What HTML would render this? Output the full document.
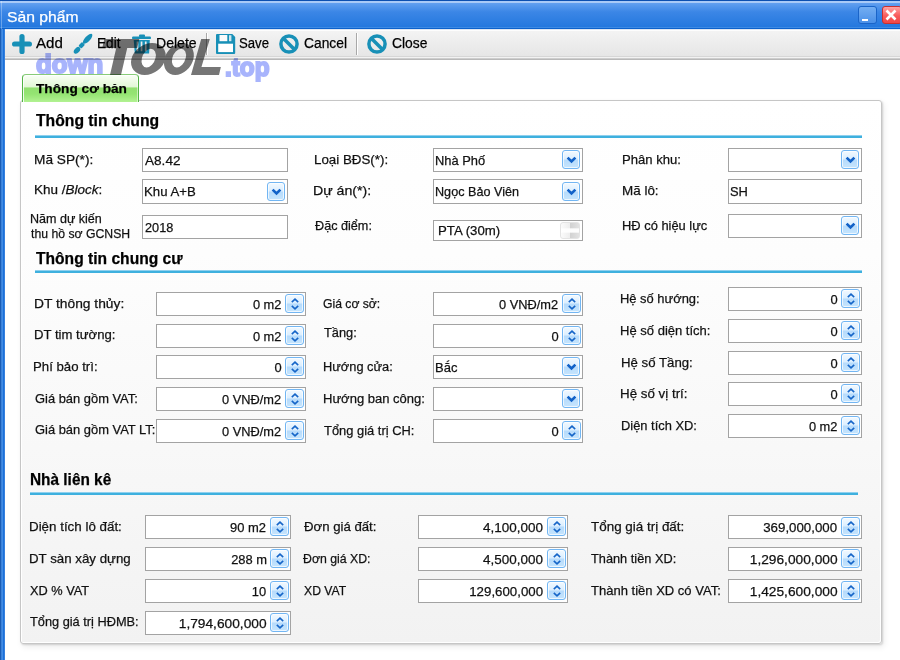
<!DOCTYPE html>
<html><head><meta charset="utf-8"><style>
*{margin:0;padding:0;box-sizing:border-box}
html,body{width:900px;height:660px;overflow:hidden;background:#fff;font-family:"Liberation Sans", sans-serif}
.a{position:absolute}
.t{position:absolute;white-space:nowrap;line-height:18px;transform-origin:0 0;font-family:"Liberation Sans", sans-serif;-webkit-text-stroke:0.25px currentColor}
.box{position:absolute;background:#fff;border:1px solid #a3a3a3}
.btn{position:absolute;border:1px solid #72b6f3;border-radius:3px;box-shadow:inset 0 0 0 1px rgba(255,255,255,0.7);background:linear-gradient(#f2f9ff 0%,#dcefff 46%,#b6dbfc 54%,#c6e5fd 100%);display:flex;align-items:center;justify-content:center}
</style></head><body>
<div class="a" style="left:0;top:0;width:5px;height:660px;background:linear-gradient(90deg,#1b5db5 0,#1b5db5 1px,#3b82d9 1px,#3b82d9 2px,#3f8ce6 2px,#3f8ce6 3px,#1c70d8 3px,#1c70d8 4px,#3580de 4px)"></div>
<div class="a" style="left:0;top:0;width:900px;height:29px;background:linear-gradient(#0c4fb0 0,#0c4fb0 1px,#a9caf7 1px,#a9caf7 3px,#62a0f0 3px,#3b86e6 12px,#2478de 27px,#3c8ae4 27px,#3c8ae4 28px,#0c62cc 28px)"></div>
<div class="t" style="left:7.00px;top:7.90px;font-size:15px;font-weight:normal;color:#fff;transform:scaleX(1.0454);">Sản phẩm</div>
<div class="a" style="left:1px;top:1px;width:1px;height:28px;background:rgba(255,255,255,0.3)"></div>
<div class="a" style="left:858px;top:6px;width:19px;height:18px;border:1px solid #1a64c8;border-radius:3px;background:linear-gradient(#74aef2,#4a90e8)"></div>
<div class="a" style="left:862px;top:19px;width:6px;height:2px;background:#fff"></div>
<div class="a" style="left:882px;top:6px;width:20px;height:18px;border:1px solid #c83030;border-radius:3px;background:linear-gradient(#ffa4a4,#f85c5c 55%,#f04646)"></div>
<svg class="a" style="left:884px;top:8px" width="14" height="14" viewBox="0 0 14 14"><path d="M2.5 2.5 L11.5 11.5 M11.5 2.5 L2.5 11.5" stroke="#fff" stroke-width="2.6"/></svg>
<div class="a" style="left:5px;top:29px;width:895px;height:31px;background:linear-gradient(#dce6f4 0,#dce6f4 1px,#fdfdfd 1px,#fdfdfd 2px,#f3f3f3 2px,#e6e6e6 27px,#d6d6d6 27px,#d6d6d6 28px,#f2f2f2 28px,#f2f2f2 29px,#cdcdcd 29px,#cdcdcd 30px,#b8b8b8 30px)"></div>
<svg class="a" style="left:12px;top:34px" width="20" height="20" viewBox="0 0 20 20"><path d="M10 2.6 V17.4 M2.6 10 H17.4" stroke="#1890b7" stroke-width="5.2" stroke-linecap="round"/></svg>
<svg class="a" style="left:0;top:0" width="100" height="60"><g transform="translate(74.6,53) rotate(-47.5)" fill="#1890b7"><ellipse cx="3.6" cy="0" rx="3.9" ry="2.5"/><rect x="7.9" y="-2.1" width="5.2" height="4.2" rx="1"/><ellipse cx="19.3" cy="0" rx="6.4" ry="2.6"/></g></svg>
<svg class="a" style="left:128px;top:28px" width="30" height="30" viewBox="0 0 30 30"><rect x="11" y="6.4" width="6" height="2.8" rx="1" fill="#1890b7"/><rect x="4" y="8.6" width="19" height="2.5" rx="1.2" fill="#1890b7"/><path fill-rule="evenodd" fill="#1890b7" d="M5.7 12 H21.8 L21.1 25.5 H6.8 Z M8.6 13.6 H10.3 V23.2 H8.6 Z M12.7 13.6 H14.4 V23.2 H12.7 Z M16.9 13.6 H18.6 V23.2 H16.9 Z"/></svg>
<svg class="a" style="left:210px;top:28px" width="30" height="30" viewBox="0 0 30 30"><path fill="#1890b7" d="M7 6 H22.3 L25.2 9 V24.9 Q25.2 25.9 24.2 25.9 H7 Q6 25.9 6 24.9 V7 Q6 6 7 6 Z"/><rect x="8.2" y="15.7" width="14.8" height="8.4" fill="#fff"/><rect x="9.5" y="7" width="7.8" height="6.2" fill="#fbfbfb"/><rect x="19" y="7.2" width="2.4" height="6" fill="#cfe6ee"/></svg>
<div class="a" style="left:279px;top:34px;width:20px;height:20px"><svg width="20" height="20" viewBox="0 0 20 20"><circle cx="10" cy="10" r="8.1" fill="none" stroke="#1890b7" stroke-width="3.5"/><path d="M4.5 4.5 L15.5 15.5" stroke="#1890b7" stroke-width="3.5"/></svg></div>
<div class="a" style="left:367px;top:34px;width:20px;height:20px"><svg width="20" height="20" viewBox="0 0 20 20"><circle cx="10" cy="10" r="8.1" fill="none" stroke="#1890b7" stroke-width="3.5"/><path d="M4.5 4.5 L15.5 15.5" stroke="#1890b7" stroke-width="3.5"/></svg></div>
<div class="a" style="left:206px;top:33px;width:1px;height:22px;background:#a8a8a8"></div><div class="a" style="left:207px;top:33px;width:1px;height:22px;background:#fff"></div>
<div class="a" style="left:356px;top:33px;width:1px;height:22px;background:#a8a8a8"></div><div class="a" style="left:357px;top:33px;width:1px;height:22px;background:#fff"></div>
<div class="t" style="left:36.10px;top:34.20px;font-size:15.5px;font-weight:normal;color:#000;transform:scaleX(0.9738);">Add</div>
<div class="t" style="left:97.00px;top:34.20px;font-size:15.5px;font-weight:normal;color:#000;transform:scaleX(0.8817);">Edit</div>
<div class="t" style="left:156.00px;top:34.20px;font-size:15.5px;font-weight:normal;color:#000;transform:scaleX(0.9058);">Delete</div>
<div class="t" style="left:239.00px;top:34.20px;font-size:15.5px;font-weight:normal;color:#000;transform:scaleX(0.8495);">Save</div>
<div class="t" style="left:304.00px;top:34.20px;font-size:15.5px;font-weight:normal;color:#000;transform:scaleX(0.8919);">Cancel</div>
<div class="t" style="left:392.00px;top:34.20px;font-size:15.5px;font-weight:normal;color:#000;transform:scaleX(0.8941);">Close</div>
<div class="a" style="left:20px;top:100px;width:862px;height:544px;border:1px solid #c6c6c6;border-radius:3px;background:linear-gradient(#ffffff 0%,#fdfdfd 28%,#f8f8f8 64%,#f2f2f2 100%);box-shadow:inset -1px -1px 0 #fff,inset 1px 1px 0 #fff,1px 1px 2px rgba(0,0,0,0.14),2px 3px 6px rgba(0,0,0,0.08)"></div>
<div class="a" style="left:22px;top:74px;width:117px;height:28px;border:1px solid #52b444;border-top-color:#88cc78;border-bottom:none;border-radius:4px 4px 0 0;box-shadow:inset 1px 1px 0 rgba(255,255,255,0.85),inset -1px 0 0 rgba(255,255,255,0.5);background:linear-gradient(#fafff6 0,#e2f7d6 44%,#92e070 48%,#94e472 70%,#b2f292 100%)"></div>
<div class="t" style="left:35.60px;top:80.30px;font-size:13.7px;font-weight:bold;color:#000;transform:scaleX(0.9983);">Thông cơ bản</div>
<div class="t" style="left:36.00px;top:111.80px;font-size:16px;font-weight:bold;color:#000;transform:scaleX(0.9824);">Thông tin chung</div>
<div class="a" style="left:35px;top:135px;width:827px;height:3px;background:linear-gradient(#8fd0ee 0,#8fd0ee 1px,#3eb0de 1px)"></div>
<div class="t" style="left:35.50px;top:250.10px;font-size:16px;font-weight:bold;color:#000;transform:scaleX(0.9758);">Thông tin chung cư</div>
<div class="a" style="left:35px;top:270px;width:827px;height:3px;background:linear-gradient(#8fd0ee 0,#8fd0ee 1px,#3eb0de 1px)"></div>
<div class="t" style="left:30.10px;top:470.80px;font-size:16px;font-weight:bold;color:#000;transform:scaleX(0.9616);">Nhà liên kê</div>
<div class="a" style="left:30px;top:492px;width:828px;height:3px;background:linear-gradient(#8fd0ee 0,#8fd0ee 1px,#3eb0de 1px)"></div>
<div class="t" style="left:34.40px;top:151.00px;font-size:13.7px;font-weight:normal;color:#111;transform:scaleX(0.9995);">Mã SP(*):</div>
<div class="t" style="left:34.40px;top:181.00px;font-size:13.7px;font-weight:normal;color:#111;transform:scaleX(0.9847);">Khu /<i>Block</i>:</div>
<div class="t" style="left:29.80px;top:209.50px;font-size:13.7px;font-weight:normal;color:#111;transform:scaleX(0.9158);">Năm dự kiến</div>
<div class="t" style="left:31.00px;top:224.50px;font-size:13.7px;font-weight:normal;color:#111;transform:scaleX(0.8937);">thu hồ sơ GCNSH</div>
<div class="box" style="left:142px;top:148px;width:146px;height:24px"></div>
<div class="t" style="left:145.00px;top:151.80px;font-size:13.7px;font-weight:normal;color:#111;transform:scaleX(0.9922);">A8.42</div>
<div class="box" style="left:142px;top:179px;width:146px;height:25px"></div>
<div class="btn" style="left:267px;top:182px;width:18px;height:19px"><svg width="11" height="8" viewBox="0 0 11 8"><path d="M1.6 1.6 L5.5 5.4 L9.4 1.6" fill="none" stroke="#1262c8" stroke-width="2.7"/></svg></div>
<div class="t" style="left:144.00px;top:182.80px;font-size:13.7px;font-weight:normal;color:#111;transform:scaleX(0.9637);">Khu A+B</div>
<div class="box" style="left:142px;top:215px;width:146px;height:24px"></div>
<div class="t" style="left:145.00px;top:218.80px;font-size:13.7px;font-weight:normal;color:#111;transform:scaleX(0.9290);">2018</div>
<div class="t" style="left:313.60px;top:151.20px;font-size:13.7px;font-weight:normal;color:#111;transform:scaleX(0.9744);">Loại BĐS(*):</div>
<div class="t" style="left:313.00px;top:182.00px;font-size:13.7px;font-weight:normal;color:#111;transform:scaleX(1.0338);">Dự án(*):</div>
<div class="t" style="left:314.70px;top:216.50px;font-size:13.7px;font-weight:normal;color:#111;transform:scaleX(0.9233);">Đặc điểm:</div>
<div class="box" style="left:433px;top:148px;width:150px;height:24px"></div>
<div class="btn" style="left:562px;top:150px;width:18px;height:19px"><svg width="11" height="8" viewBox="0 0 11 8"><path d="M1.6 1.6 L5.5 5.4 L9.4 1.6" fill="none" stroke="#1262c8" stroke-width="2.7"/></svg></div>
<div class="t" style="left:435.00px;top:151.80px;font-size:13.7px;font-weight:normal;color:#111;transform:scaleX(0.9423);">Nhà Phố</div>
<div class="box" style="left:433px;top:179px;width:150px;height:25px"></div>
<div class="btn" style="left:562px;top:182px;width:18px;height:19px"><svg width="11" height="8" viewBox="0 0 11 8"><path d="M1.6 1.6 L5.5 5.4 L9.4 1.6" fill="none" stroke="#1262c8" stroke-width="2.7"/></svg></div>
<div class="t" style="left:435.00px;top:182.80px;font-size:13.7px;font-weight:normal;color:#111;transform:scaleX(0.9223);">Ngọc Bảo Viên</div>
<div class="box" style="left:433px;top:220px;width:150px;height:21px"></div>
<div class="a" style="left:560px;top:222px;width:20px;height:17px;border:1px solid #e4e4e4;border-radius:3px;background:linear-gradient(rgba(255,255,255,0) 30%,rgba(255,255,255,0.95) 40%,rgba(255,255,255,0.95) 60%,rgba(255,255,255,0) 70%),linear-gradient(90deg,#fbfbfb 0,#eeeeee 48%,#d2d2d2 52%,#e2e2e2 100%)"></div>
<div class="t" style="left:437.50px;top:222.10px;font-size:13.7px;font-weight:normal;color:#111;transform:scaleX(0.9662);">PTA (30m)</div>
<div class="t" style="left:621.80px;top:151.20px;font-size:13.7px;font-weight:normal;color:#111;transform:scaleX(0.9573);">Phân khu:</div>
<div class="t" style="left:621.80px;top:182.00px;font-size:13.7px;font-weight:normal;color:#111;transform:scaleX(0.9816);">Mã lô:</div>
<div class="t" style="left:621.80px;top:216.50px;font-size:13.7px;font-weight:normal;color:#111;transform:scaleX(0.9414);">HĐ có hiệu lực</div>
<div class="box" style="left:728px;top:148px;width:134px;height:24px"></div>
<div class="btn" style="left:841px;top:150px;width:18px;height:19px"><svg width="11" height="8" viewBox="0 0 11 8"><path d="M1.6 1.6 L5.5 5.4 L9.4 1.6" fill="none" stroke="#1262c8" stroke-width="2.7"/></svg></div>
<div class="box" style="left:728px;top:179px;width:134px;height:25px"></div>
<div class="t" style="left:730.00px;top:182.80px;font-size:13.7px;font-weight:normal;color:#111;transform:scaleX(0.9412);">SH</div>
<div class="box" style="left:728px;top:214px;width:134px;height:24px"></div>
<div class="btn" style="left:841px;top:216px;width:18px;height:19px"><svg width="11" height="8" viewBox="0 0 11 8"><path d="M1.6 1.6 L5.5 5.4 L9.4 1.6" fill="none" stroke="#1262c8" stroke-width="2.7"/></svg></div>
<div class="t" style="left:34.40px;top:294.80px;font-size:13.7px;font-weight:normal;color:#111;transform:scaleX(1.0080);">DT thông thủy:</div>
<div class="t" style="left:34.40px;top:326.20px;font-size:13.7px;font-weight:normal;color:#111;transform:scaleX(0.9600);">DT tim tường:</div>
<div class="t" style="left:33.40px;top:357.90px;font-size:13.7px;font-weight:normal;color:#111;transform:scaleX(0.9647);">Phí bảo trì:</div>
<div class="t" style="left:35.40px;top:390.00px;font-size:13.7px;font-weight:normal;color:#111;transform:scaleX(0.9428);">Giá bán gồm VAT:</div>
<div class="t" style="left:35.40px;top:420.90px;font-size:13.7px;font-weight:normal;color:#111;transform:scaleX(0.9430);">Giá bán gồm VAT LT:</div>
<div class="box" style="left:156px;top:292px;width:150px;height:24px"></div>
<div class="btn" style="left:285px;top:294px;width:19px;height:19px"><svg width="10" height="14" viewBox="0 0 10 14"><path d="M1.8 5.2 L5 2.2 L8.2 5.2 M1.8 8.8 L5 11.8 L8.2 8.8" fill="none" stroke="#1565c8" stroke-width="1.6"/></svg></div>
<div class="t" style="right:619.00px;top:295.80px;font-size:13.7px;color:#111;transform:scaleX(0.9375);transform-origin:100% 0">0 m2</div>
<div class="box" style="left:156px;top:324px;width:150px;height:24px"></div>
<div class="btn" style="left:285px;top:326px;width:19px;height:19px"><svg width="10" height="14" viewBox="0 0 10 14"><path d="M1.8 5.2 L5 2.2 L8.2 5.2 M1.8 8.8 L5 11.8 L8.2 8.8" fill="none" stroke="#1565c8" stroke-width="1.6"/></svg></div>
<div class="t" style="right:619.00px;top:327.80px;font-size:13.7px;color:#111;transform:scaleX(0.9375);transform-origin:100% 0">0 m2</div>
<div class="box" style="left:156px;top:355px;width:150px;height:24px"></div>
<div class="btn" style="left:285px;top:357px;width:19px;height:19px"><svg width="10" height="14" viewBox="0 0 10 14"><path d="M1.8 5.2 L5 2.2 L8.2 5.2 M1.8 8.8 L5 11.8 L8.2 8.8" fill="none" stroke="#1565c8" stroke-width="1.6"/></svg></div>
<div class="t" style="right:618.00px;top:358.80px;font-size:13.7px;color:#111;transform:scaleX(0.9433);transform-origin:100% 0">0</div>
<div class="box" style="left:156px;top:387px;width:150px;height:24px"></div>
<div class="btn" style="left:285px;top:389px;width:19px;height:19px"><svg width="10" height="14" viewBox="0 0 10 14"><path d="M1.8 5.2 L5 2.2 L8.2 5.2 M1.8 8.8 L5 11.8 L8.2 8.8" fill="none" stroke="#1565c8" stroke-width="1.6"/></svg></div>
<div class="t" style="right:619.00px;top:390.80px;font-size:13.7px;color:#111;transform:scaleX(0.9351);transform-origin:100% 0">0 VNĐ/m2</div>
<div class="box" style="left:156px;top:419px;width:150px;height:24px"></div>
<div class="btn" style="left:285px;top:421px;width:19px;height:19px"><svg width="10" height="14" viewBox="0 0 10 14"><path d="M1.8 5.2 L5 2.2 L8.2 5.2 M1.8 8.8 L5 11.8 L8.2 8.8" fill="none" stroke="#1565c8" stroke-width="1.6"/></svg></div>
<div class="t" style="right:619.00px;top:422.80px;font-size:13.7px;color:#111;transform:scaleX(0.9351);transform-origin:100% 0">0 VNĐ/m2</div>
<div class="t" style="left:323.10px;top:295.30px;font-size:13.7px;font-weight:normal;color:#111;transform:scaleX(0.8893);">Giá cơ sở:</div>
<div class="t" style="left:324.40px;top:324.40px;font-size:13.7px;font-weight:normal;color:#111;transform:scaleX(0.9361);">Tầng:</div>
<div class="t" style="left:323.00px;top:358.40px;font-size:13.7px;font-weight:normal;color:#111;transform:scaleX(0.9366);">Hướng cửa:</div>
<div class="t" style="left:323.00px;top:390.00px;font-size:13.7px;font-weight:normal;color:#111;transform:scaleX(0.9507);">Hướng ban công:</div>
<div class="t" style="left:323.50px;top:422.20px;font-size:13.7px;font-weight:normal;color:#111;transform:scaleX(0.9428);">Tổng giá trị CH:</div>
<div class="box" style="left:433px;top:292px;width:150px;height:24px"></div>
<div class="btn" style="left:562px;top:294px;width:19px;height:19px"><svg width="10" height="14" viewBox="0 0 10 14"><path d="M1.8 5.2 L5 2.2 L8.2 5.2 M1.8 8.8 L5 11.8 L8.2 8.8" fill="none" stroke="#1565c8" stroke-width="1.6"/></svg></div>
<div class="t" style="right:342.00px;top:295.80px;font-size:13.7px;color:#111;transform:scaleX(0.9351);transform-origin:100% 0">0 VNĐ/m2</div>
<div class="box" style="left:433px;top:324px;width:150px;height:24px"></div>
<div class="btn" style="left:562px;top:326px;width:19px;height:19px"><svg width="10" height="14" viewBox="0 0 10 14"><path d="M1.8 5.2 L5 2.2 L8.2 5.2 M1.8 8.8 L5 11.8 L8.2 8.8" fill="none" stroke="#1565c8" stroke-width="1.6"/></svg></div>
<div class="t" style="right:341.00px;top:327.80px;font-size:13.7px;color:#111;transform:scaleX(0.9433);transform-origin:100% 0">0</div>
<div class="box" style="left:433px;top:355px;width:150px;height:24px"></div>
<div class="btn" style="left:562px;top:357px;width:18px;height:19px"><svg width="11" height="8" viewBox="0 0 11 8"><path d="M1.6 1.6 L5.5 5.4 L9.4 1.6" fill="none" stroke="#1262c8" stroke-width="2.7"/></svg></div>
<div class="t" style="left:435.00px;top:358.80px;font-size:13.7px;font-weight:normal;color:#111;transform:scaleX(0.9486);">Bắc</div>
<div class="box" style="left:433px;top:387px;width:150px;height:24px"></div>
<div class="btn" style="left:562px;top:389px;width:18px;height:19px"><svg width="11" height="8" viewBox="0 0 11 8"><path d="M1.6 1.6 L5.5 5.4 L9.4 1.6" fill="none" stroke="#1262c8" stroke-width="2.7"/></svg></div>
<div class="box" style="left:433px;top:419px;width:150px;height:24px"></div>
<div class="btn" style="left:562px;top:421px;width:19px;height:19px"><svg width="10" height="14" viewBox="0 0 10 14"><path d="M1.8 5.2 L5 2.2 L8.2 5.2 M1.8 8.8 L5 11.8 L8.2 8.8" fill="none" stroke="#1565c8" stroke-width="1.6"/></svg></div>
<div class="t" style="right:341.00px;top:422.80px;font-size:13.7px;color:#111;transform:scaleX(0.9433);transform-origin:100% 0">0</div>
<div class="t" style="left:620.40px;top:290.20px;font-size:13.7px;font-weight:normal;color:#111;transform:scaleX(0.9442);">Hệ số hướng:</div>
<div class="t" style="left:620.40px;top:321.80px;font-size:13.7px;font-weight:normal;color:#111;transform:scaleX(0.9514);">Hệ số diện tích:</div>
<div class="t" style="left:621.40px;top:353.50px;font-size:13.7px;font-weight:normal;color:#111;transform:scaleX(0.9659);">Hệ số Tầng:</div>
<div class="t" style="left:620.40px;top:384.90px;font-size:13.7px;font-weight:normal;color:#111;transform:scaleX(0.9755);">Hệ số vị trí:</div>
<div class="t" style="left:621.40px;top:417.00px;font-size:13.7px;font-weight:normal;color:#111;transform:scaleX(0.9414);">Diện tích XD:</div>
<div class="box" style="left:728px;top:287px;width:134px;height:24px"></div>
<div class="btn" style="left:841px;top:289px;width:19px;height:19px"><svg width="10" height="14" viewBox="0 0 10 14"><path d="M1.8 5.2 L5 2.2 L8.2 5.2 M1.8 8.8 L5 11.8 L8.2 8.8" fill="none" stroke="#1565c8" stroke-width="1.6"/></svg></div>
<div class="t" style="right:62.00px;top:290.80px;font-size:13.7px;color:#111;transform:scaleX(0.9433);transform-origin:100% 0">0</div>
<div class="box" style="left:728px;top:319px;width:134px;height:24px"></div>
<div class="btn" style="left:841px;top:321px;width:19px;height:19px"><svg width="10" height="14" viewBox="0 0 10 14"><path d="M1.8 5.2 L5 2.2 L8.2 5.2 M1.8 8.8 L5 11.8 L8.2 8.8" fill="none" stroke="#1565c8" stroke-width="1.6"/></svg></div>
<div class="t" style="right:62.00px;top:322.80px;font-size:13.7px;color:#111;transform:scaleX(0.9433);transform-origin:100% 0">0</div>
<div class="box" style="left:728px;top:351px;width:134px;height:24px"></div>
<div class="btn" style="left:841px;top:353px;width:19px;height:19px"><svg width="10" height="14" viewBox="0 0 10 14"><path d="M1.8 5.2 L5 2.2 L8.2 5.2 M1.8 8.8 L5 11.8 L8.2 8.8" fill="none" stroke="#1565c8" stroke-width="1.6"/></svg></div>
<div class="t" style="right:62.00px;top:354.80px;font-size:13.7px;color:#111;transform:scaleX(0.9433);transform-origin:100% 0">0</div>
<div class="box" style="left:728px;top:382px;width:134px;height:24px"></div>
<div class="btn" style="left:841px;top:384px;width:19px;height:19px"><svg width="10" height="14" viewBox="0 0 10 14"><path d="M1.8 5.2 L5 2.2 L8.2 5.2 M1.8 8.8 L5 11.8 L8.2 8.8" fill="none" stroke="#1565c8" stroke-width="1.6"/></svg></div>
<div class="t" style="right:62.00px;top:385.80px;font-size:13.7px;color:#111;transform:scaleX(0.9433);transform-origin:100% 0">0</div>
<div class="box" style="left:728px;top:414px;width:134px;height:24px"></div>
<div class="btn" style="left:841px;top:416px;width:19px;height:19px"><svg width="10" height="14" viewBox="0 0 10 14"><path d="M1.8 5.2 L5 2.2 L8.2 5.2 M1.8 8.8 L5 11.8 L8.2 8.8" fill="none" stroke="#1565c8" stroke-width="1.6"/></svg></div>
<div class="t" style="right:63.00px;top:417.80px;font-size:13.7px;color:#111;transform:scaleX(0.9375);transform-origin:100% 0">0 m2</div>
<div class="t" style="left:28.50px;top:518.30px;font-size:13.7px;font-weight:normal;color:#111;transform:scaleX(0.9759);">Diện tích lô đất:</div>
<div class="t" style="left:28.50px;top:550.10px;font-size:13.7px;font-weight:normal;color:#111;transform:scaleX(0.9706);">DT sàn xây dựng</div>
<div class="t" style="left:29.50px;top:581.50px;font-size:13.7px;font-weight:normal;color:#111;transform:scaleX(0.9333);">XD % VAT</div>
<div class="t" style="left:29.50px;top:613.40px;font-size:13.7px;font-weight:normal;color:#111;transform:scaleX(0.9333);">Tổng giá trị HĐMB:</div>
<div class="box" style="left:145px;top:515px;width:146px;height:24px"></div>
<div class="btn" style="left:270px;top:517px;width:19px;height:19px"><svg width="10" height="14" viewBox="0 0 10 14"><path d="M1.8 5.2 L5 2.2 L8.2 5.2 M1.8 8.8 L5 11.8 L8.2 8.8" fill="none" stroke="#1565c8" stroke-width="1.6"/></svg></div>
<div class="t" style="right:634.00px;top:518.80px;font-size:13.7px;color:#111;transform:scaleX(0.9453);transform-origin:100% 0">90 m2</div>
<div class="box" style="left:145px;top:547px;width:146px;height:24px"></div>
<div class="btn" style="left:270px;top:549px;width:19px;height:19px"><svg width="10" height="14" viewBox="0 0 10 14"><path d="M1.8 5.2 L5 2.2 L8.2 5.2 M1.8 8.8 L5 11.8 L8.2 8.8" fill="none" stroke="#1565c8" stroke-width="1.6"/></svg></div>
<div class="t" style="right:633.00px;top:550.80px;font-size:13.7px;color:#111;transform:scaleX(0.9433);transform-origin:100% 0">288 m</div>
<div class="box" style="left:145px;top:579px;width:146px;height:24px"></div>
<div class="btn" style="left:270px;top:581px;width:19px;height:19px"><svg width="10" height="14" viewBox="0 0 10 14"><path d="M1.8 5.2 L5 2.2 L8.2 5.2 M1.8 8.8 L5 11.8 L8.2 8.8" fill="none" stroke="#1565c8" stroke-width="1.6"/></svg></div>
<div class="t" style="right:634.00px;top:582.80px;font-size:13.7px;color:#111;transform:scaleX(0.9433);transform-origin:100% 0">10</div>
<div class="box" style="left:145px;top:611px;width:146px;height:24px"></div>
<div class="btn" style="left:270px;top:613px;width:19px;height:19px"><svg width="10" height="14" viewBox="0 0 10 14"><path d="M1.8 5.2 L5 2.2 L8.2 5.2 M1.8 8.8 L5 11.8 L8.2 8.8" fill="none" stroke="#1565c8" stroke-width="1.6"/></svg></div>
<div class="t" style="right:633.00px;top:614.80px;font-size:13.7px;color:#111;transform:scaleX(1.0027);transform-origin:100% 0">1,794,600,000</div>
<div class="t" style="left:303.50px;top:518.30px;font-size:13.7px;font-weight:normal;color:#111;transform:scaleX(0.9637);">Đơn giá đất:</div>
<div class="t" style="left:303.00px;top:550.10px;font-size:13.7px;font-weight:normal;color:#111;transform:scaleX(0.8983);">Đơn giá XD:</div>
<div class="t" style="left:303.50px;top:581.50px;font-size:13.7px;font-weight:normal;color:#111;transform:scaleX(0.8900);">XD VAT</div>
<div class="box" style="left:418px;top:515px;width:150px;height:24px"></div>
<div class="btn" style="left:547px;top:517px;width:19px;height:19px"><svg width="10" height="14" viewBox="0 0 10 14"><path d="M1.8 5.2 L5 2.2 L8.2 5.2 M1.8 8.8 L5 11.8 L8.2 8.8" fill="none" stroke="#1565c8" stroke-width="1.6"/></svg></div>
<div class="t" style="right:357.00px;top:518.80px;font-size:13.7px;color:#111;transform:scaleX(0.9836);transform-origin:100% 0">4,100,000</div>
<div class="box" style="left:418px;top:547px;width:150px;height:24px"></div>
<div class="btn" style="left:547px;top:549px;width:19px;height:19px"><svg width="10" height="14" viewBox="0 0 10 14"><path d="M1.8 5.2 L5 2.2 L8.2 5.2 M1.8 8.8 L5 11.8 L8.2 8.8" fill="none" stroke="#1565c8" stroke-width="1.6"/></svg></div>
<div class="t" style="right:357.00px;top:550.80px;font-size:13.7px;color:#111;transform:scaleX(0.9836);transform-origin:100% 0">4,500,000</div>
<div class="box" style="left:418px;top:579px;width:150px;height:24px"></div>
<div class="btn" style="left:547px;top:581px;width:19px;height:19px"><svg width="10" height="14" viewBox="0 0 10 14"><path d="M1.8 5.2 L5 2.2 L8.2 5.2 M1.8 8.8 L5 11.8 L8.2 8.8" fill="none" stroke="#1565c8" stroke-width="1.6"/></svg></div>
<div class="t" style="right:357.00px;top:582.80px;font-size:13.7px;color:#111;transform:scaleX(0.9708);transform-origin:100% 0">129,600,000</div>
<div class="t" style="left:590.50px;top:518.20px;font-size:13.7px;font-weight:normal;color:#111;transform:scaleX(0.9808);">Tổng giá trị đất:</div>
<div class="t" style="left:590.50px;top:549.80px;font-size:13.7px;font-weight:normal;color:#111;transform:scaleX(0.9331);">Thành tiền XD:</div>
<div class="t" style="left:590.50px;top:581.50px;font-size:13.7px;font-weight:normal;color:#111;transform:scaleX(0.9512);">Thành tiền XD có VAT:</div>
<div class="box" style="left:728px;top:515px;width:134px;height:24px"></div>
<div class="btn" style="left:841px;top:517px;width:19px;height:19px"><svg width="10" height="14" viewBox="0 0 10 14"><path d="M1.8 5.2 L5 2.2 L8.2 5.2 M1.8 8.8 L5 11.8 L8.2 8.8" fill="none" stroke="#1565c8" stroke-width="1.6"/></svg></div>
<div class="t" style="right:63.00px;top:518.80px;font-size:13.7px;color:#111;transform:scaleX(0.9708);transform-origin:100% 0">369,000,000</div>
<div class="box" style="left:728px;top:547px;width:134px;height:24px"></div>
<div class="btn" style="left:841px;top:549px;width:19px;height:19px"><svg width="10" height="14" viewBox="0 0 10 14"><path d="M1.8 5.2 L5 2.2 L8.2 5.2 M1.8 8.8 L5 11.8 L8.2 8.8" fill="none" stroke="#1565c8" stroke-width="1.6"/></svg></div>
<div class="t" style="right:62.00px;top:550.80px;font-size:13.7px;color:#111;transform:scaleX(1.0027);transform-origin:100% 0">1,296,000,000</div>
<div class="box" style="left:728px;top:579px;width:134px;height:24px"></div>
<div class="btn" style="left:841px;top:581px;width:19px;height:19px"><svg width="10" height="14" viewBox="0 0 10 14"><path d="M1.8 5.2 L5 2.2 L8.2 5.2 M1.8 8.8 L5 11.8 L8.2 8.8" fill="none" stroke="#1565c8" stroke-width="1.6"/></svg></div>
<div class="t" style="right:62.00px;top:582.80px;font-size:13.7px;color:#111;transform:scaleX(1.0027);transform-origin:100% 0">1,425,600,000</div>
<div class="t" style="left:36px;top:34.40px;font-size:25px;line-height:60px;font-weight:bold;color:#a8b4fc;-webkit-text-stroke:2.0px #a8b4fc;transform:scaleX(1.03);mix-blend-mode:multiply">down</div>
<svg style="position:absolute;left:0;top:0;mix-blend-mode:multiply" width="260" height="90"><g transform="translate(0,75) skewX(-13) translate(0,-75)" fill="#767676"><path d="M96 39 H131 V48 H121 V75 H110 V48 H96 Z"/><path fill-rule="evenodd" d="M127.7 59 a17 16 0 1 0 34 0 a17 16 0 1 0 -34 0 Z M138 58.1 a6.8 9.4 0 1 0 13.6 0 a6.8 9.4 0 1 0 -13.6 0 Z"/><path fill-rule="evenodd" d="M160.7 59 a14.5 16 0 1 0 29 0 a14.5 16 0 1 0 -29 0 Z M168.4 58.1 a6.7 9.4 0 1 0 13.4 0 a6.7 9.4 0 1 0 -13.4 0 Z"/><path d="M192.9 39 H201.5 L199.6 67 H219 V75 H191 Z"/></g></svg>
<div class="t" style="left:224.8px;top:37.00px;font-size:26px;line-height:60px;font-weight:bold;color:#a8b4fc;-webkit-text-stroke:2.0px #a8b4fc;transform:scaleX(0.935);mix-blend-mode:multiply">.top</div>
</body></html>
